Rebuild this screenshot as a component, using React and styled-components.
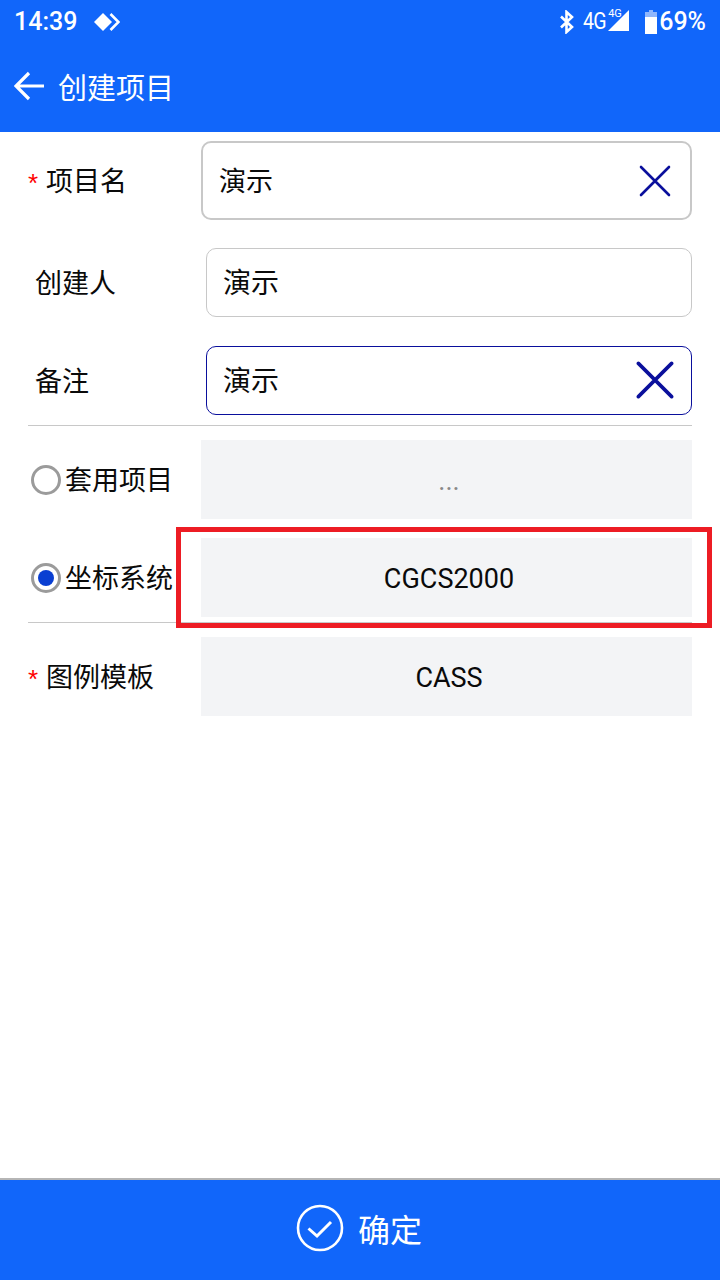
import styled, { createGlobalStyle } from "styled-components";

const GlobalStyle = createGlobalStyle`
  html, body {
    margin: 0;
    padding: 0;
    background: #fff;
  }
  * {
    box-sizing: border-box;
  }
`;

const Page = styled.div`
  width: 720px;
  height: 1280px;
  display: flex;
  flex-direction: column;
  overflow: hidden;
  background: #fff;
  color: #0a0a0a;
  font-family: Roboto, "Noto Sans CJK SC", sans-serif;
`;

const Top = styled.header`
  height: 132px;
  flex: none;
  background: #1166fa;
  color: #fff;
`;

const StatusBar = styled.div`
  height: 44px;
  padding: 0 14px;
  display: flex;
  align-items: center;
  justify-content: space-between;
`;

const StatusGroup = styled.div`
  display: flex;
  align-items: center;
`;

const Clock = styled.span`
  font-size: 25px;
  font-weight: 500;
  line-height: 44px;
  margin-right: 18px;
`;

const Percent = styled.span`
  font-size: 25px;
  font-weight: 500;
  line-height: 44px;
  margin-left: 2px;
`;

const Network = styled.span`
  font-size: 23px;
  letter-spacing: -1px;
  transform: scaleX(0.85);
  transform-origin: left center;
  width: 23px;
  margin-left: 7px;
  line-height: 44px;
`;

const SmallNetwork = styled.span`
  font-size: 11px;
  width: 0;
  margin: -18px 0 0 2px;
  white-space: nowrap;
`;

const SignalIcon = styled.svg`
  margin-top: -3px;
`;

const BatteryIcon = styled.svg`
  margin-left: 16px;
`;

const NfcIcon = styled.svg`
  margin: -1px 0 0 -1px;
`;

const TitleBar = styled.div`
  height: 88px;
  padding: 0 14px 4px;
  display: flex;
  align-items: center;
  gap: 12px;
`;

const Title = styled.h1`
  margin: 0;
  font-size: 29px;
  font-weight: 400;
  line-height: 40px;
  font-family: "Noto Sans CJK SC", sans-serif;
`;

const Form = styled.main`
  flex: 1;
  padding: 0 28px;
  display: flex;
  flex-direction: column;
`;

const Row = styled.div`
  display: flex;
  align-items: center;
  justify-content: space-between;
  margin-top: ${(p) => p.$top}px;
`;

const Label = styled.label`
  display: flex;
  align-items: center;
  padding: 0 0 2px ${(p) => p.$indent || 0}px;
  font-size: 27px;
  line-height: 40px;
  font-family: "Noto Sans CJK SC", sans-serif;
`;

const Star = styled.span`
  width: 18px;
  color: #f00;
  font-size: 26px;
  font-family: "Liberation Sans", sans-serif;
  line-height: 30px;
  padding-top: 6px;
`;

const Radio = styled.span`
  width: 30px;
  height: 30px;
  flex: none;
  margin: 2px 4px 0 3px;
  border: 3px solid #9b9b9b;
  border-radius: 50%;
  display: flex;
  align-items: center;
  justify-content: center;

  &::after {
    content: "";
    width: 16px;
    height: 16px;
    border-radius: 50%;
    background: ${(p) => (p.$checked ? "#0a3fd2" : "transparent")};
  }
`;

const TextField = styled.div`
  width: ${(p) => p.$width}px;
  height: ${(p) => p.$height}px;
  padding: 0 ${(p) => p.$pad}px ${(p) => (p.$font > 27 ? 4 : 2)}px ${(p) => p.$text}px;
  display: flex;
  align-items: center;
  justify-content: space-between;
  border: ${(p) => p.$border};
  border-radius: 10px;
  font-size: ${(p) => p.$font}px;
  font-family: "Noto Sans CJK SC", sans-serif;
`;

const Clear = styled.svg`
  display: block;
  flex: none;
  margin-top: 2px;
`;

const Picker = styled.div`
  position: relative;
  width: 491px;
  height: 79px;
  display: flex;
  align-items: center;
  justify-content: center;
  background: #f3f4f6;
  font-size: 27px;
  color: ${(p) => (p.$empty ? "#888" : "#0a0a0a")};
  padding: 2px 0 0 5px;
`;

const Highlight = styled.div`
  position: absolute;
  top: -11px;
  right: -20px;
  bottom: -11px;
  left: -25px;
  border: 5px solid #ed1c24;
`;

const Divider = styled.hr`
  margin: ${(p) => p.$top}px 0 0;
  border: 0;
  height: 1px;
  background: #c8c8c8;
`;

const Footer = styled.button`
  height: 102px;
  flex: none;
  border: 0;
  border-top: 2px solid #b5b5b5;
  padding: 0 2px 4px 0;
  background: #1166fa;
  color: #fff;
  display: flex;
  align-items: center;
  justify-content: center;
  gap: 14px;
  font-size: 32px;
  font-family: "Noto Sans CJK SC", sans-serif;
`;

function ClearIcon({ size, stroke }) {
  return (
    <Clear width={size} height={size} viewBox="0 0 32 32">
      <path d="M2 2 L30 30 M30 2 L2 30" stroke="#0a0f9c" strokeWidth={stroke} strokeLinecap="round" fill="none" />
    </Clear>
  );
}

function StatusIcons() {
  return (
    <StatusGroup>
      <svg width="18" height="24" viewBox="0 0 18 24">
        <path d="M3 6.5 L14 17 L8.5 22 V2 L14 7 L3 17.5" fill="none" stroke="#fff" strokeWidth="2.6" />
      </svg>
      <Network>4G</Network>
      <SmallNetwork>4G</SmallNetwork>
      <SignalIcon width="21" height="21" viewBox="0 0 21 21">
        <path d="M21 0 V21 H0 Z" fill="#fff" />
      </SignalIcon>
      <BatteryIcon width="12" height="24" viewBox="0 0 12 24">
        <path d="M4 0 H8 V2 H12 V24 H0 V2 H4 Z" fill="#fff" />
        <path d="M4 0 H8 V2 H12 V7 H0 V2 H4 Z" fill="#8fb6fc" />
      </BatteryIcon>
      <Percent>69%</Percent>
    </StatusGroup>
  );
}

export default function App() {
  return (
    <Page>
      <GlobalStyle />
      <Top>
        <StatusBar>
          <StatusGroup>
            <Clock>14:39</Clock>
            <NfcIcon width="26" height="18" viewBox="0 0 26 18">
              <path d="M9 0 L18 9 L9 18 L0 9 Z" fill="#fff" />
              <path d="M16.5 1 L24.5 9 L16.5 17" fill="none" stroke="#fff" strokeWidth="2.6" />
            </NfcIcon>
          </StatusGroup>
          <StatusIcons />
        </StatusBar>
        <TitleBar>
          <svg width="32" height="30" viewBox="0 0 32 30">
            <path d="M30 15 H3 M15 2 L2 15 L15 28" fill="none" stroke="#fff" strokeWidth="3.2" />
          </svg>
          <Title>创建项目</Title>
        </TitleBar>
      </Top>

      <Form>
        <Row $top={9}>
          <Label><Star>*</Star>项目名</Label>
          <TextField $width={491} $height={79} $border="2px solid #c8c8c8" $text={16} $pad={19} $font={27}>
            演示
            <ClearIcon size={32} stroke={2.6} />
          </TextField>
        </Row>
        <Row $top={28}>
          <Label $indent={7}>创建人</Label>
          <TextField $width={486} $height={69} $border="1px solid #c8c8c8" $text={16} $pad={17} $font={28}>
            演示
          </TextField>
        </Row>
        <Row $top={29}>
          <Label $indent={7}>备注</Label>
          <TextField $width={486} $height={69} $border="1px solid #0a0f9c" $text={16} $pad={17} $font={28}>
            演示
            <ClearIcon size={38} stroke={3} />
          </TextField>
        </Row>
        <Divider $top={10} />
        <Row $top={14}>
          <Label><Radio />套用项目</Label>
          <Picker $empty>...</Picker>
        </Row>
        <Row $top={19}>
          <Label><Radio $checked />坐标系统</Label>
          <Picker>
            CGCS2000
            <Highlight />
          </Picker>
        </Row>
        <Divider $top={5} />
        <Row $top={14}>
          <Label><Star>*</Star>图例模板</Label>
          <Picker>CASS</Picker>
        </Row>
      </Form>

      <Footer>
        <svg width="48" height="48" viewBox="0 0 48 48">
          <circle cx="24" cy="24" r="22" fill="none" stroke="#fff" strokeWidth="2.6" />
          <path d="M12.5 24.5 L21 32 L35 18" fill="none" stroke="#fff" strokeWidth="3" />
        </svg>
        确定
      </Footer>
    </Page>
  );
}
